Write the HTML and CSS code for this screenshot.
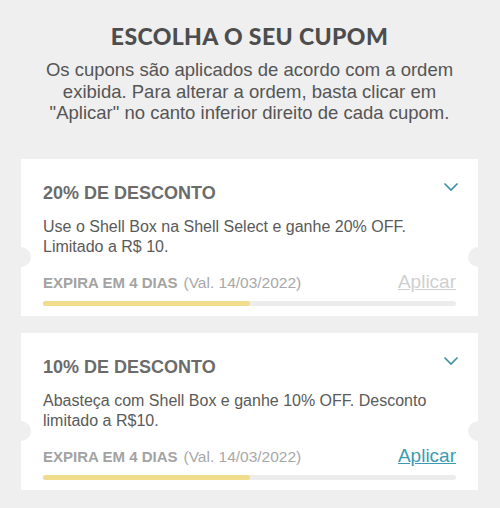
FILE: index.html
```html
<!DOCTYPE html>
<html lang="pt-BR">
<head>
  <meta charset="UTF-8">
  <meta name="viewport" content="width=device-width, initial-scale=1.0">
  <title>Escolha o seu cupom</title>
  <link rel="stylesheet" href="styles.css">
</head>
<body>
  <div class="page">
    <header class="intro">
      <h1>ESCOLHA O SEU CUPOM</h1>
      <p>Os cupons são aplicados de acordo com a ordem exibida. Para alterar a ordem, basta clicar em "Aplicar" no canto inferior direito de cada cupom.</p>
    </header>

    <div class="coupon">
      <div class="coupon-head">
        <h2>20% DE DESCONTO</h2>
        <svg class="chevron" width="16" height="10" viewBox="0 0 16 10"><path d="M1.5 1.5l6.5 6.5 6.5-6.5" fill="none" stroke="#3a8ea3" stroke-width="1.6"/></svg>
      </div>
      <p class="desc">Use o Shell Box na Shell Select e ganhe 20% OFF. Limitado a R$ 10.</p>
      <div class="coupon-foot">
        <span class="expire">EXPIRA EM 4 DIAS</span>
        <span class="valid">(Val. 14/03/2022)</span>
        <a class="apply disabled" href="#">Aplicar</a>
      </div>
      <div class="bar"><div class="fill" style="width: 50%"></div></div>
    </div>

    <div class="coupon">
      <div class="coupon-head">
        <h2>10% DE DESCONTO</h2>
        <svg class="chevron" width="16" height="10" viewBox="0 0 16 10"><path d="M1.5 1.5l6.5 6.5 6.5-6.5" fill="none" stroke="#3a8ea3" stroke-width="1.6"/></svg>
      </div>
      <p class="desc">Abasteça com Shell Box e ganhe 10% OFF. Desconto limitado a R$10.</p>
      <div class="coupon-foot">
        <span class="expire">EXPIRA EM 4 DIAS</span>
        <span class="valid">(Val. 14/03/2022)</span>
        <a class="apply" href="#">Aplicar</a>
      </div>
      <div class="bar"><div class="fill" style="width: 50%"></div></div>
    </div>
  </div>
</body>
</html>
```

FILE: styles.css
```css
body {
  margin: 0;
  background-color: #efefef;
  font-family: "Liberation Sans", Arial, sans-serif;
}

.page {
  display: flex;
  flex-direction: column;
  gap: 17px;
  padding: 0 22px 0 21px;
}

.intro {
  text-align: center;
  padding: 22px 10px 18px;
}

.intro h1 {
  margin: 0 0 9px;
  font-family: Lato, sans-serif;
  font-weight: 900;
  font-size: 23px;
  letter-spacing: 0.4px;
  color: #4d4d4d;
}

.intro p {
  margin: 0;
  font-size: 18.5px;
  line-height: 21.5px;
  color: #555;
}

.coupon {
  position: relative;
  background-color: #fff;
  padding: 22px 22px 10px;
}

.coupon::before,
.coupon::after {
  content: "";
  position: absolute;
  top: 88px;
  width: 20px;
  height: 20px;
  border-radius: 50%;
  background-color: #efefef;
}

.coupon::before {
  left: -10px;
}

.coupon::after {
  right: -10px;
}

.coupon-head {
  display: flex;
  justify-content: space-between;
  align-items: flex-start;
}

.coupon-head h2 {
  margin: 0;
  font-size: 18px;
  line-height: 24px;
  color: #6b6b6b;
}

.chevron {
  margin: 1px -3px 0 0;
}

.desc {
  margin: 12px 0 0;
  font-size: 16px;
  line-height: 20px;
  color: #5a5a5a;
}

.coupon-foot {
  display: flex;
  align-items: baseline;
  margin-top: 14px;
}

.expire {
  font-size: 15px;
  font-weight: bold;
  color: #a3a3a3;
}

.valid {
  margin-left: 6px;
  font-size: 15.5px;
  color: #a8a8a8;
}

.apply {
  margin-left: auto;
  font-size: 19px;
  color: #3a9bb2;
}

.apply.disabled {
  color: #cfcfcf;
}

.bar {
  margin-top: 8px;
  height: 5px;
  border-radius: 3px;
  background-color: #ececec;
}

.fill {
  height: 100%;
  border-radius: 3px;
  background-color: #f0dc8c;
}
```
